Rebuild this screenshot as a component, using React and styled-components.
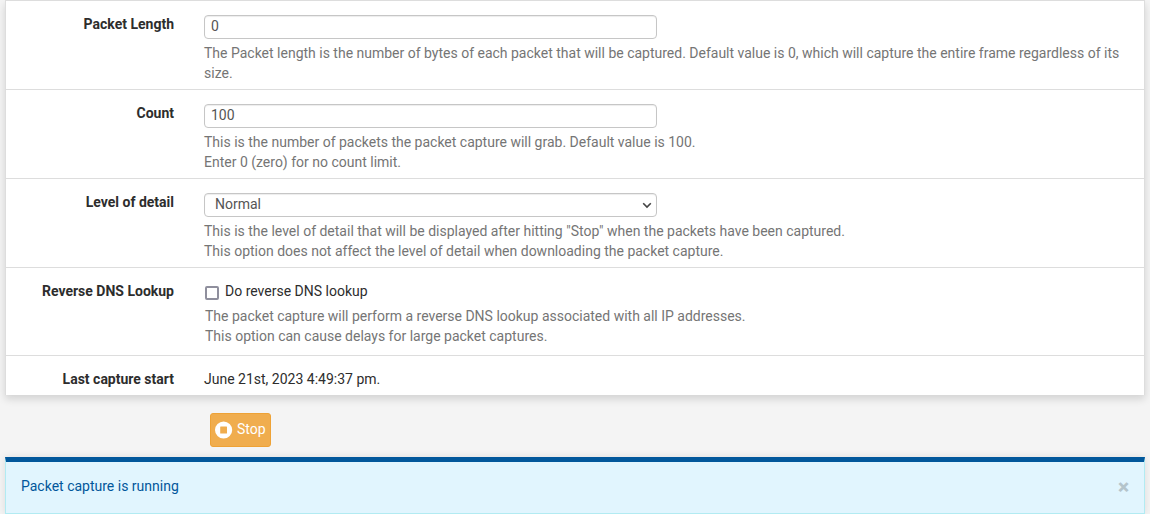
import React from "react";
import styled, { createGlobalStyle } from "styled-components";

const Global = createGlobalStyle`
  * { box-sizing: border-box; }
  body {
    margin: 0;
    height: 514px;
    overflow: hidden;
    background: #f4f4f4;
    color: #2d2d2d;
    font: 14px/20px Roboto, "Liberation Sans", sans-serif;
  }
`;
const Page = styled.main`padding: 0 5px;`;
const Panel = styled.section`
  background: #fff;
  border: 1px solid #ddd;
  border-top: 0;
  border-bottom: 0;
  box-shadow: 0 4px 8px rgba(0, 0, 0, 0.14);
  height: 395px;
`;
const Row = styled.div`
  display: grid;
  grid-template-columns: 168px 1fr;
  column-gap: 30px;
  height: ${(p) => p.$height}px;
  padding: 13px 15px 0 0;
  border-top: 1px solid #ddd;
`;
const Label = styled.label`
  text-align: right;
  font-weight: 700;
`;
const Field = styled.div`min-width: 0;`;
const Input = styled.input`
  display: block;
  width: 453px;
  height: 24px;
  margin-top: 1px;
  padding: 0 6px 2px;
  border: 1px solid #c6c6c6;
  border-radius: 4px;
  background: #fff;
  box-shadow: inset 0 1px 1px rgba(0, 0, 0, 0.075);
  color: #555;
  font: inherit;
`;
const SelectWrap = styled.div`
  display: flex;
  align-items: center;
  width: 453px;
  height: 24px;
  margin-top: 1px;
  padding: 0 4px 2px 10px;
  border: 1px solid #c6c6c6;
  border-radius: 4px;
  box-shadow: inset 0 1px 1px rgba(0, 0, 0, 0.075);
  color: #555;
  justify-content: space-between;
`;
const Chevron = styled.svg`
  margin-top: 2px;
`;
const Help = styled.p`
  margin: ${(p) => p.$top || 4}px 0 0 ${(p) => p.$left || 0}px;
  color: #757575;
  letter-spacing: -0.002px;
`;
const CheckLine = styled.label`
  display: flex;
  align-items: flex-start;
`;
const Check = styled.input`
  appearance: none;
  width: 14px;
  height: 14px;
  margin: 5px 6px 0 1px;
  border: 2px solid #8f8f9d;
  border-radius: 2px;
  background: #fff;
`;
const Actions = styled.div`
  padding: 18px 0 10px 205px;
`;
const StopButton = styled.button`
  display: flex;
  align-items: center;
  gap: 4px;
  width: 61px;
  height: 34px;
  padding: 0 4px;
  border: 1px solid #eea236;
  border-radius: 3px;
  background: #f0ad4e;
  color: #fff;
  font: inherit;
`;
const StopLabel = styled.span`
  padding-bottom: 2px;
`;
const Alert = styled.div`
  display: flex;
  justify-content: space-between;
  height: 57px;
  padding: 14px 15px 0;
  border: 1px solid #b2ebf2;
  border-top: 5px solid #01579b;
  background: #e1f5fe;
  box-shadow: 0 0 8px rgba(0, 0, 0, 0.1);
  color: #01579b;
`;
const Close = styled.button`
  height: 20px;
  padding: 0;
  border: 0;
  background: none;
  color: #b4c4cb;
  font: 900 21px/22px Roboto, sans-serif;
`;

export default function App() {
  return (
    <Page>
      <Global />
      <Panel>
        <Row $height={89}>
          <Label htmlFor="length">Packet Length</Label>
          <Field>
            <Input id="length" defaultValue="0" />
            <Help>The Packet length is the number of bytes of each packet that will be captured. Default value is 0, which will capture the entire frame regardless of its size.</Help>
          </Field>
        </Row>
        <Row $height={89}>
          <Label htmlFor="count">Count</Label>
          <Field>
            <Input id="count" defaultValue="100" />
            <Help>This is the number of packets the packet capture will grab. Default value is 100.<br />Enter 0 (zero) for no count limit.</Help>
          </Field>
        </Row>
        <Row $height={89}>
          <Label>Level of detail</Label>
          <Field>
            <SelectWrap>
              Normal
              <Chevron width="10" height="8" viewBox="0 0 10 8" fill="none" stroke="#444" strokeWidth="1.6"><path d="M1.2 2.2 5 6 8.8 2.2" /></Chevron>
            </SelectWrap>
            <Help>This is the level of detail that will be displayed after hitting "Stop" when the packets have been captured.<br />This option does not affect the level of detail when downloading the packet capture.</Help>
          </Field>
        </Row>
        <Row $height={88}>
          <Label>Reverse DNS Lookup</Label>
          <Field>
            <CheckLine><Check type="checkbox" />Do reverse DNS lookup</CheckLine>
            <Help $top={5} $left={1}>The packet capture will perform a reverse DNS lookup associated with all IP addresses.<br />This option can cause delays for large packet captures.</Help>
          </Field>
        </Row>
        <Row $height={40}>
          <Label as="div">Last capture start</Label>
          <Field>June 21st, 2023 4:49:37 pm.</Field>
        </Row>
      </Panel>
      <Actions>
        <StopButton>
          <svg width="18" height="18" viewBox="0 0 18 18"><circle cx="8.6" cy="9" r="8.6" fill="#fff" /><rect x="5.2" y="5.6" width="6.8" height="6.8" rx="0.5" fill="#f0ad4e" /></svg>
          <StopLabel>Stop</StopLabel>
        </StopButton>
      </Actions>
      <Alert>
        <span>Packet capture is running</span>
        <Close aria-label="Close">×</Close>
      </Alert>
    </Page>
  );
}
